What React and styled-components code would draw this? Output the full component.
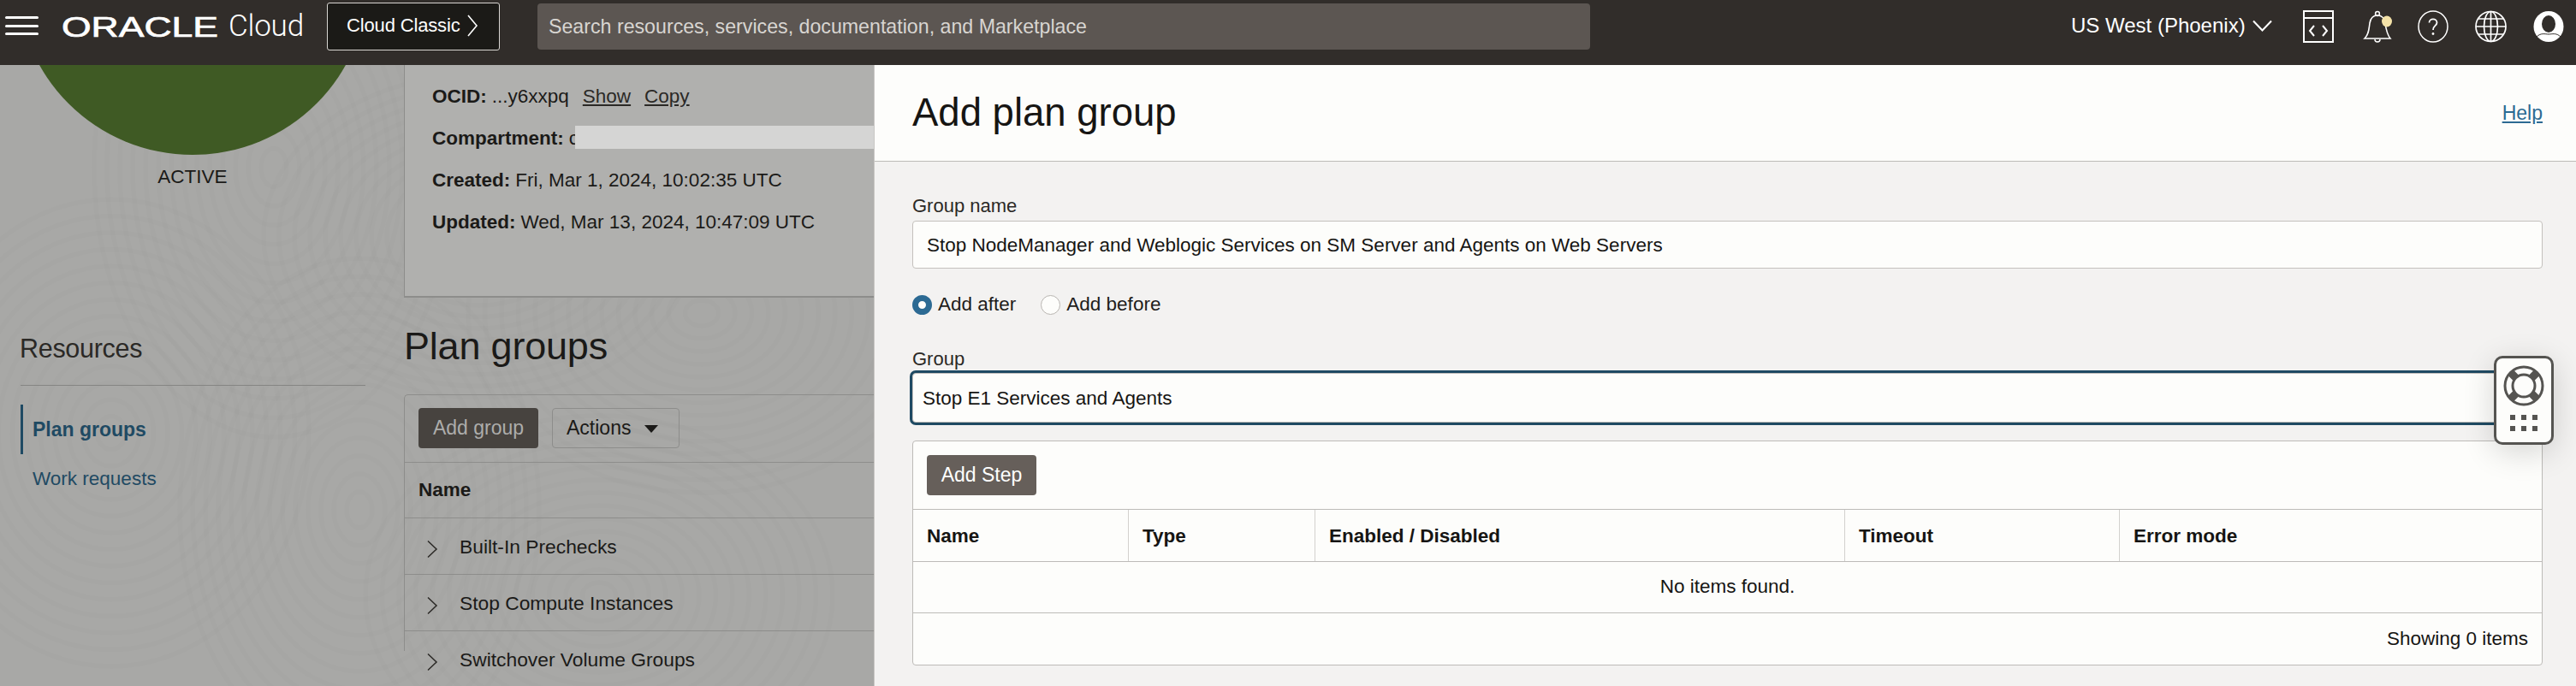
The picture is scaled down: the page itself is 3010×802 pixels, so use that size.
import React from "react";
import styled, { createGlobalStyle } from "styled-components";

const Global = createGlobalStyle`
  html, body { margin: 0; padding: 0; background: #a8a8a6; }
  body { font-family: "Liberation Sans", Arial, sans-serif; color: #161513; font-size: 22.5px; }
  * { box-sizing: border-box; }
`;

const Page = styled.div`
  position: relative;
  width: 3010px;
  height: 802px;
  overflow: hidden;
  display: flex;
  flex-direction: column;
`;

const TopBar = styled.header`
  height: 76px;
  flex: none;
  background: #312d2a;
  display: flex;
  align-items: flex-start;
  color: #fff;
`;
const Burger = styled.div`
  margin: 19px 0 0 6px;
  width: 39px;
  height: 22px;
  display: flex;
  flex-direction: column;
  justify-content: space-between;
  span { display: block; height: 3px; background: #fff; border-radius: 2px; }
`;
const Logo = styled.svg`
  margin: 17px 0 0 27px;
  width: 184px;
  height: 28px;
  flex: none;
  overflow: visible;
`;
const LogoCloud = styled.span`
  margin: 12px 0 0 11px;
  width: 115px;
  font: 300 35px/38px Roboto, "Liberation Sans", sans-serif;
  letter-spacing: -0.2px;
`;
const ClassicButton = styled.div`
  margin-top: 3px;
  width: 202px;
  height: 56px;
  background: #1b1a17;
  border: 1px solid #d8d6d2;
  border-radius: 3px;
  display: flex;
  align-items: center;
  padding-left: 22px;
  gap: 7px;
  font-size: 22px;
  letter-spacing: -0.15px;
  padding-bottom: 2px;
`;
const Search = styled.div`
  margin: 4px 0 0 44px;
  width: 1230px;
  height: 54px;
  background: #5c5652;
  border-radius: 4px;
  padding-left: 13px;
  display: flex;
  align-items: center;
  color: #d8d5d1;
  font-size: 23.2px;
`;
const Region = styled.div`
  margin: 14px 0 0 562px;
  height: 32px;
  width: 241px;
  display: flex;
  align-items: center;
  gap: 8px;
  font-size: 24px;
  white-space: nowrap;
`;
const TopIcons = styled.div`
  margin: 12px 0 0 30px;
  display: flex;
  align-items: flex-start;
  gap: 31px;
`;
const IconSvg = styled.svg`
  display: block;
  width: ${p => p.$w}px;
  height: 38px;
  flex: none;
  overflow: visible;
`;

const Main = styled.main`
  position: relative;
  flex: 1;
  display: grid;
  grid-template-columns: 472px 549px 1989px;
  overflow: hidden;
  min-height: 0;
`;
const Texture = styled.svg`
  position: absolute;
  left: 0;
  top: 0;
  width: 1021px;
  height: 726px;
`;
const Side = styled.aside`
  position: relative;
  min-width: 0;
`;
const Sphere = styled.div`
  width: 410px;
  height: 410px;
  margin: -305px 0 0 20px;
  border-radius: 50%;
  background: #3f5a24;
`;
const Status = styled.div`
  width: 450px;
  margin-top: 12px;
  text-align: center;
  font-size: 22.5px;
  line-height: 28px;
  color: #1b1a18;
`;
const ResourcesTitle = styled.div`
  margin: 168px 0 0 23px;
  font-size: 30.5px;
  line-height: 36px;
  letter-spacing: -0.3px;
  color: #2b2926;
`;
const Rule = styled.div`
  margin: 25px 0 0 24px;
  width: 403px;
  height: 1px;
  background: #858583;
`;
const Nav = styled.nav`
  margin: 22px 0 0 24px;
  display: flex;
  flex-direction: column;
`;
const NavItem = styled.div`
  height: 58px;
  display: flex;
  align-items: center;
  padding-left: 11px;
  border-left: 3px solid ${p => (p.$active ? "#1f4a63" : "transparent")};
  color: #1f4a63;
  font-weight: ${p => (p.$active ? 700 : 400)};
  font-size: ${p => (p.$active ? 23 : 22.5)}px;
`;

const Content = styled.section`
  position: relative;
  min-width: 0;
`;
const InfoCard = styled.div`
  position: relative;
  height: 272px;
  padding-top: 12px;
  background: #b0b0ae;
  border-left: 1px solid #8d8d8b;
  border-bottom: 2px solid #8d8d8b;
  padding-left: 32px;
`;
const InfoRow = styled.div`
  position: relative;
  height: 49px;
  display: flex;
  align-items: center;
  gap: 6px;
  font-size: 22.5px;
  white-space: nowrap;
  color: #1b1a18;
  b { font-weight: 700; }
`;
const Lnk = styled.span`
  text-decoration: underline;
  margin-left: 10px;
  color: #2b2926;
`;
const Redact = styled.div`
  position: absolute;
  left: 167px;
  top: 10px;
  width: 350px;
  height: 27px;
  background: #d5d5d4;
`;
const SectionTitle = styled.h2`
  margin: 29px 0 0;
  font-weight: 400;
  font-size: 45px;
  line-height: 56px;
  color: #1b1a18;
  letter-spacing: -0.2px;
`;
const ListCard = styled.div`
  margin-top: 28px;
  height: 300px;
  border-left: 1px solid #8d8d8b;
  border-top: 1px solid #8d8d8b;
  border-top-left-radius: 5px;
`;
const ListToolbar = styled.div`
  height: 79px;
  display: flex;
  align-items: flex-start;
  gap: 16px;
  padding: 15px 16px;
  border-bottom: 1px solid #8d8d8b;
`;
const DimPrimary = styled.div`
  width: 140px;
  height: 47px;
  background: #47433f;
  border-radius: 4px;
  color: #adadab;
  display: flex;
  align-items: center;
  justify-content: center;
  font-size: 23px;
`;
const DimSecondary = styled.div`
  width: 149px;
  height: 47px;
  border: 1px solid #8d8d8b;
  border-radius: 4px;
  display: flex;
  align-items: center;
  padding-left: 16px;
  gap: 16px;
  font-size: 23px;
  color: #1b1a18;
  i {
    width: 0; height: 0;
    border-left: 8px solid transparent;
    border-right: 8px solid transparent;
    border-top: 9px solid #1b1a18;
    margin-top: 2px;
  }
`;
const ListHead = styled.div`
  height: 65px;
  padding-left: 16px;
  display: flex;
  align-items: center;
  font-weight: 700;
  font-size: 22.5px;
  border-bottom: 1px solid #8d8d8b;
  color: #1b1a18;
`;
const ListRow = styled.div`
  height: 66px;
  padding: 2px 0 0 25px;
  display: flex;
  align-items: center;
  gap: 25px;
  font-size: 22.8px;
  border-bottom: 1px solid #8d8d8b;
  color: #1b1a18;
  svg { flex: none; margin-top: 4px; }
`;

const Panel = styled.section`
  background: #f3f2f1;
  border-left: 1px solid #c9c7c4;
  display: flex;
  flex-direction: column;
  min-width: 0;
  position: relative;
`;
const PanelHead = styled.div`
  height: 113px;
  flex: none;
  background: #fdfdfb;
  border-bottom: 1px solid #bdbbb8;
  padding: 0 39px 0 44px;
  display: flex;
  align-items: center;
  justify-content: space-between;
`;
const PanelTitle = styled.h1`
  margin: 0;
  font-weight: 400;
  font-size: 45.5px;
  line-height: 56px;
  color: #161513;
`;
const HelpLink = styled.a`
  font-size: 23px;
  color: #2c6a93;
  text-decoration: underline;
`;
const PanelBody = styled.div`
  padding: 41px 39px 0 44px;
  display: flex;
  flex-direction: column;
`;
const Label = styled.div`
  font-size: 22px;
  line-height: 22px;
  color: #2b2926;
  margin-top: ${p => p.$top || 0}px;
`;
const Field = styled.div`
  margin-top: 6px;
  height: 56px;
  background: #fdfdfb;
  border: 1px solid #c4c1bd;
  border-radius: 4px;
  display: flex;
  align-items: center;
  padding: 1px 0 0 16px;
  font-size: 22.5px;
  color: #161513;
`;
const FocusField = styled(Field)`
  margin-top: 5px;
  height: 58px;
  padding: 1px 0 0 11px;
  box-shadow: 0 0 0 3px #1f4a63;
`;
const RadioRow = styled.div`
  margin-top: 30px;
  height: 24px;
  display: flex;
  align-items: center;
  font-size: 22.5px;
  color: #1f1d1b;
`;
const Radio = styled.span`
  width: 23px;
  height: 23px;
  border-radius: 50%;
  flex: none;
  background: #fdfdfb;
  border: ${p => (p.$on ? "7.5px solid #2c6a93" : "1px solid #b8b5b1")};
  margin-right: 7px;
`;
const RadioText = styled.span`
  margin-right: ${p => p.$mr || 0}px;
`;
const StepsCard = styled.div`
  margin-top: 21px;
  height: 263px;
  background: #fdfdfb;
  border: 1px solid #bdbbb8;
  border-radius: 4px;
  display: flex;
  flex-direction: column;
`;
const StepsToolbar = styled.div`
  height: 80px;
  flex: none;
  padding: 16px;
  border-bottom: 1px solid #bdbbb8;
`;
const PrimaryButton = styled.div`
  width: 128px;
  height: 47px;
  background: #665f5a;
  border-radius: 4px;
  color: #fff;
  display: flex;
  align-items: center;
  justify-content: center;
  font-size: 23px;
`;
const StepsHead = styled.div`
  height: 61px;
  flex: none;
  display: grid;
  grid-template-columns: 252px 218px 619px 321px 1fr;
  border-bottom: 1px solid #bdbbb8;
`;
const HeadCell = styled.div`
  display: flex;
  align-items: center;
  padding: 1px 0 0 16px;
  font-weight: 700;
  font-size: 22.5px;
  color: #161513;
  border-right: ${p => (p.$last ? "none" : "1px solid #d3d1ce")};
`;
const EmptyRow = styled.div`
  height: 60px;
  flex: none;
  display: flex;
  align-items: center;
  justify-content: center;
  font-size: 22.5px;
  border-bottom: 1px solid #bdbbb8;
  padding-bottom: 1px;
`;
const StepsFoot = styled.div`
  flex: 1;
  display: flex;
  align-items: center;
  justify-content: flex-end;
  padding-right: 16px;
  font-size: 22.5px;
`;

const HelpWidget = styled.div`
  position: absolute;
  left: 2914px;
  top: 416px;
  width: 70px;
  height: 104px;
  background: #fdfdfb;
  border: 3px solid #555451;
  border-radius: 10px;
  box-shadow: 0 8px 36px rgba(0, 0, 0, 0.16);
  display: flex;
  flex-direction: column;
  align-items: center;
  padding-top: 8px;
`;
const Dots = styled.div`
  margin-top: 10px;
  display: grid;
  grid-template-columns: repeat(3, 6px);
  gap: 7px;
  span { width: 6px; height: 6px; background: #555451; display: block; }
`;

const Chevron = () => (
  <svg width="14" height="22" viewBox="0 0 14 22">
    <path d="M2 1.5 L12 11 L2 20.5" fill="none" stroke="#2b2926" strokeWidth="1.5" />
  </svg>
);

const rings = [
  [320, 120, 1.0, 1.5],
  [130, 430, 1.1, 1.3],
  [560, 200, 1.2, 0.9],
  [820, 290, 1.3, 1.0],
  [420, 520, 1.0, 1.4],
  [700, 620, 1.3, 1.0],
];

export default function App() {
  return (
    <Page>
      <Global />
      <TopBar>
        <Burger><span /><span /><span /></Burger>
        <Logo viewBox="0 0 184 28">
          <text x="0" y="26" fontFamily="Liberation Sans" fontSize="33" fill="#fff" stroke="#fff" strokeWidth="0.7" textLength="183" lengthAdjust="spacingAndGlyphs">ORACLE</text>
        </Logo>
        <LogoCloud>Cloud</LogoCloud>
        <ClassicButton>
          Cloud Classic
          <svg width="14" height="28" viewBox="0 0 14 28"><path d="M2 2 L12 14 L2 26" fill="none" stroke="#fff" strokeWidth="1.6" /></svg>
        </ClassicButton>
        <Search>Search resources, services, documentation, and Marketplace</Search>
        <Region>
          US West (Phoenix)
          <svg width="23" height="14" viewBox="0 0 23 14"><path d="M1 1.5 L11.5 12.5 L22 1.5" fill="none" stroke="#fff" strokeWidth="2" /></svg>
        </Region>
        <TopIcons>
          <IconSvg $w={36} viewBox="0 0 36 38">
            <rect x="1" y="1" width="34" height="36" fill="none" stroke="#fff" strokeWidth="2" />
            <path d="M1 9 H35" stroke="#fff" strokeWidth="2" />
            <path d="M13 18 L8 24 L13 30 M23 18 L28 24 L23 30" fill="none" stroke="#fff" strokeWidth="2" />
          </IconSvg>
          <IconSvg $w={36} viewBox="0 0 36 38">
            <path d="M5 33 C10 28 10 22 11 15 C12 9 15 6 20 6 C25 6 28 9 29 15 C30 22 31 28 35 33 Z" fill="none" stroke="#fff" strokeWidth="1.6" />
            <circle cx="20" cy="4" r="2.4" fill="none" stroke="#fff" strokeWidth="1.5" />
            <path d="M17 34 C17 38 23 38 23 34" fill="none" stroke="#fff" strokeWidth="1.5" />
            <ellipse cx="31" cy="13" rx="6" ry="6.5" fill="#f4e2a8" />
          </IconSvg>
          <IconSvg $w={36} viewBox="0 0 36 38">
            <ellipse cx="18" cy="19" rx="17" ry="18" fill="none" stroke="#fff" strokeWidth="1.5" />
            <path d="M13.5 14.5 C13.5 9 22.5 9 22.5 14.5 C22.5 18 18 18 18 23" fill="none" stroke="#fff" strokeWidth="1.8" />
            <circle cx="18" cy="27.5" r="1.4" fill="#fff" />
          </IconSvg>
          <IconSvg $w={37} viewBox="0 0 37 38">
            <circle cx="18.5" cy="19" r="17.5" fill="none" stroke="#fff" strokeWidth="1.7" />
            <ellipse cx="18.5" cy="19" rx="8" ry="17.5" fill="none" stroke="#fff" strokeWidth="1.7" />
            <path d="M18.5 1.5 V36.5 M1 19 H36 M4 10 H33 M4 28 H33" fill="none" stroke="#fff" strokeWidth="1.7" />
          </IconSvg>
          <IconSvg $w={36} viewBox="0 0 36 38">
            <ellipse cx="18" cy="19" rx="17.5" ry="18" fill="#fff" />
            <ellipse cx="18" cy="16" rx="8" ry="10" fill="#312d2a" />
            <path d="M4 31 C9 26 14 28 18 28 C22 28 27 26 32 31" fill="none" stroke="#312d2a" strokeWidth="1" />
          </IconSvg>
        </TopIcons>
      </TopBar>
      <Main>
        <Texture viewBox="0 0 1021 726" aria-hidden="true">
          {rings.map(([cx, cy, a, b], i) =>
            Array.from({ length: 14 }, (_, k) => (
              <ellipse
                key={`${i}-${k}`}
                cx={cx}
                cy={cy}
                rx={(k + 1) * 15 * a}
                ry={(k + 1) * 15 * b}
                fill="none"
                stroke="#000"
                strokeOpacity="0.009"
                strokeWidth="6"
              />
            ))
          )}
        </Texture>
        <Side>
          <Sphere />
          <Status>ACTIVE</Status>
          <ResourcesTitle>Resources</ResourcesTitle>
          <Rule />
          <Nav>
            <NavItem $active>Plan groups</NavItem>
            <NavItem>Work requests</NavItem>
          </Nav>
        </Side>
        <Content>
          <InfoCard>
            <InfoRow><b>OCID:</b> ...y6xxpq <Lnk>Show</Lnk><Lnk>Copy</Lnk></InfoRow>
            <InfoRow><b>Compartment:</b> c<Redact /></InfoRow>
            <InfoRow><b>Created:</b> Fri, Mar 1, 2024, 10:02:35 UTC</InfoRow>
            <InfoRow><b>Updated:</b> Wed, Mar 13, 2024, 10:47:09 UTC</InfoRow>
          </InfoCard>
          <SectionTitle>Plan groups</SectionTitle>
          <ListCard>
            <ListToolbar>
              <DimPrimary>Add group</DimPrimary>
              <DimSecondary>Actions <i /></DimSecondary>
            </ListToolbar>
            <ListHead>Name</ListHead>
            <ListRow><Chevron />Built-In Prechecks</ListRow>
            <ListRow><Chevron />Stop Compute Instances</ListRow>
            <ListRow><Chevron />Switchover Volume Groups</ListRow>
          </ListCard>
        </Content>
        <Panel>
          <PanelHead>
            <PanelTitle>Add plan group</PanelTitle>
            <HelpLink>Help</HelpLink>
          </PanelHead>
          <PanelBody>
            <Label>Group name</Label>
            <Field>Stop NodeManager and Weblogic Services on SM Server and Agents on Web Servers</Field>
            <RadioRow>
              <Radio $on />
              <RadioText $mr={29}>Add after</RadioText>
              <Radio />
              <RadioText>Add before</RadioText>
            </RadioRow>
            <Label $top={41}>Group</Label>
            <FocusField>Stop E1 Services and Agents</FocusField>
            <StepsCard>
              <StepsToolbar><PrimaryButton>Add Step</PrimaryButton></StepsToolbar>
              <StepsHead>
                <HeadCell>Name</HeadCell>
                <HeadCell>Type</HeadCell>
                <HeadCell>Enabled / Disabled</HeadCell>
                <HeadCell>Timeout</HeadCell>
                <HeadCell $last>Error mode</HeadCell>
              </StepsHead>
              <EmptyRow>No items found.</EmptyRow>
              <StepsFoot>Showing 0 items</StepsFoot>
            </StepsCard>
          </PanelBody>
        </Panel>
      </Main>
      <HelpWidget>
        <svg width="48" height="48" viewBox="0 0 48 48">
          <circle cx="24" cy="24" r="22" fill="#fdfdfb" stroke="#555451" strokeWidth="3" />
          <path d="M8.5 8.5 L39.5 39.5 M39.5 8.5 L8.5 39.5" stroke="#555451" strokeWidth="9" />
          <circle cx="24" cy="24" r="13" fill="#fdfdfb" stroke="#555451" strokeWidth="3" />
        </svg>
        <Dots><span /><span /><span /><span /><span /><span /></Dots>
      </HelpWidget>
    </Page>
  );
}
